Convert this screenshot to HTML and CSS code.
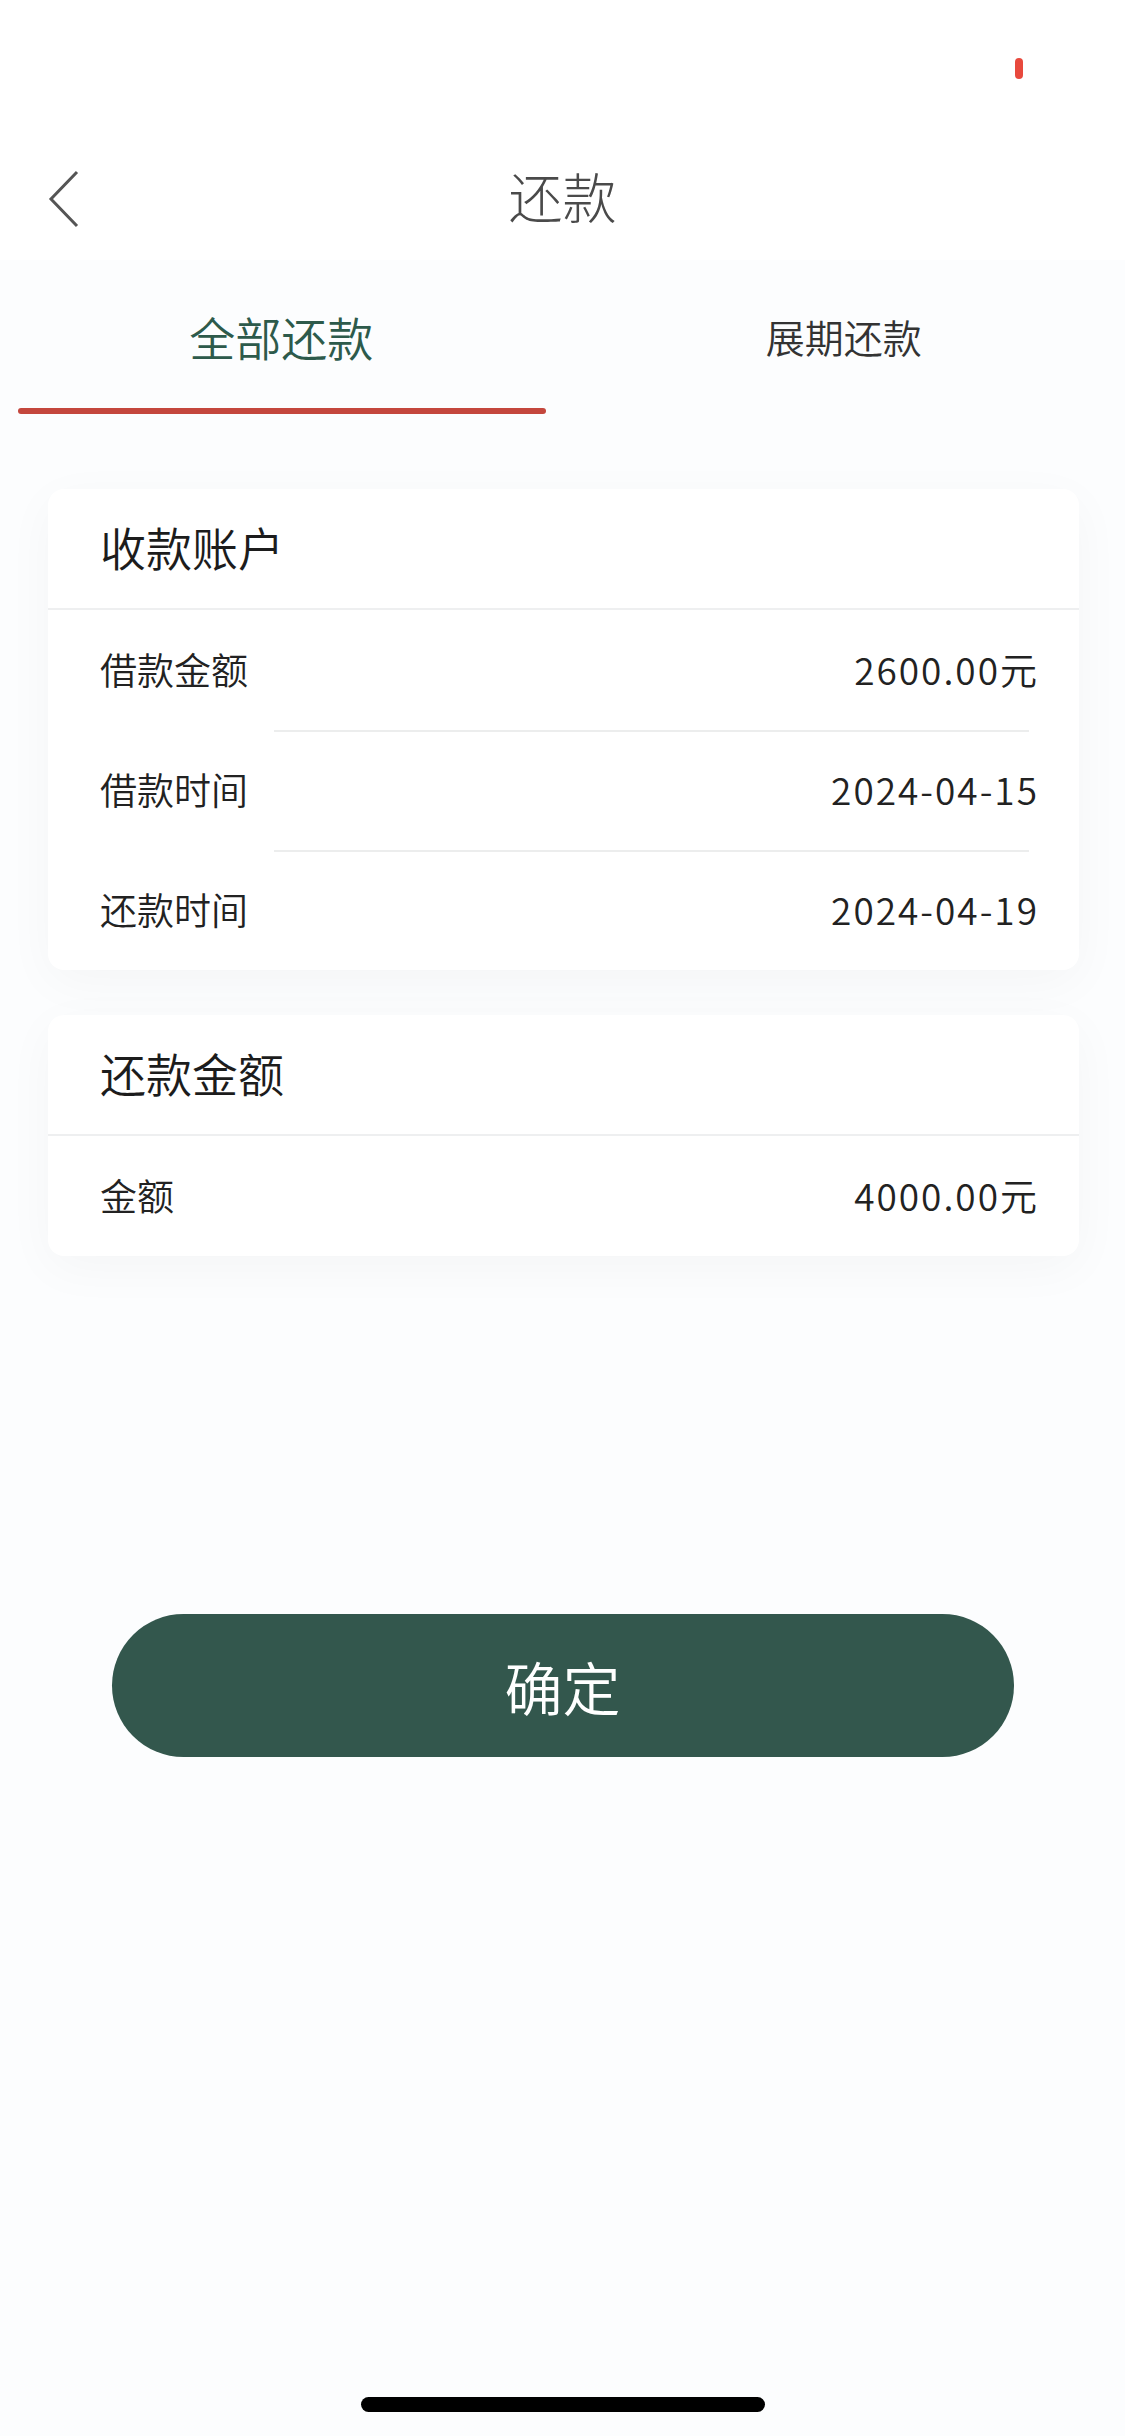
FILE: index.html
```html
<!DOCTYPE html>
<html lang="zh-CN">
<head>
    <meta charset="UTF-8">
    <meta name="viewport" content="width=device-width, initial-scale=1.0">
    <title>还款</title>
    <link rel="stylesheet" href="styles.css">
</head>
<body>
    <div class="page">
        <!-- Header: status bar + nav -->
        <div class="top">
            <div class="status-bar">
                <span class="rec-dot"></span>
            </div>
            <div class="nav-bar">
                <a class="back" href="#">
                    <svg width="32" height="58" viewBox="0 0 32 58">
                        <polyline points="29,2 3,29 29,56" fill="none" stroke="#555" stroke-width="3"/>
                    </svg>
                </a>
                <div class="nav-title">还款</div>
                <div></div>
            </div>
        </div>

        <!-- Tabs -->
        <div class="tabs">
            <div class="tab active"><span class="tab-label">全部还款</span></div>
            <div class="tab"><span class="tab-label">展期还款</span></div>
        </div>

        <!-- Account card -->
        <div class="card">
            <div class="card-header">收款账户</div>
            <div class="row">
                <span class="row-label">借款金额</span>
                <span class="row-value">2600.00元</span>
            </div>
            <div class="row">
                <span class="row-label">借款时间</span>
                <span class="row-value">2024-04-15</span>
            </div>
            <div class="row">
                <span class="row-label">还款时间</span>
                <span class="row-value">2024-04-19</span>
            </div>
        </div>

        <!-- Amount card -->
        <div class="card">
            <div class="card-header">还款金额</div>
            <div class="row">
                <span class="row-label">金额</span>
                <span class="row-value">4000.00元</span>
            </div>
        </div>

        <button class="confirm">确定</button>

        <div class="home-indicator"></div>
    </div>
</body>
</html>
```

FILE: styles.css
```css
body {
    margin: 0;
    background-color: #fcfdfe;
    font-family: "Noto Sans CJK SC", "Noto Sans", sans-serif;
    font-weight: 350;
    color: #222;
}
.page {
    width: 1125px;
    min-height: 2436px;
    display: flex;
    flex-direction: column;
}
/* Header */
.top {
    background-color: #fff;
}
.status-bar {
    height: 131px;
    display: flex;
    justify-content: flex-end;
    padding: 58px 102px 0 0;
    box-sizing: border-box;
}
.rec-dot {
    width: 8px;
    height: 21px;
    border-radius: 4px;
    background-color: #e8493d;
}
.nav-bar {
    height: 129px;
    display: grid;
    grid-template-columns: 1fr auto 1fr;
    align-items: center;
    padding: 0 48px;
}
.back {
    display: flex;
    align-items: center;
    margin-top: 6px;
}
.nav-title {
    font-size: 54px;
    font-weight: 300;
    color: #4a4a4a;
    line-height: 1;
}
/* Tabs */
.tabs {
    display: flex;
}
.tab {
    flex: 1;
    display: flex;
    flex-direction: column;
    align-items: center;
}
.tab-label {
    height: 148px;
    padding-top: 4px;
    box-sizing: border-box;
    display: flex;
    align-items: center;
    font-size: 39px;
    color: #333;
}
.tab::after {
    content: "";
    align-self: stretch;
    height: 6px;
    margin: 0 17px 0 18px;
    border-radius: 3px;
}
.tab.active .tab-label {
    font-size: 46px;
    color: #2d5a4b;
}
.tab.active::after {
    background-color: #c4473d;
}
/* Cards */
.card {
    margin: 75px 46px 0 48px;
    background-color: #fff;
    border-radius: 16px;
    box-shadow: 0 12px 50px rgba(0, 0, 0, 0.035);
}
.card + .card {
    margin-top: 45px;
}
.card-header {
    height: 121px;
    box-sizing: border-box;
    display: flex;
    align-items: center;
    padding: 0 0 6px 52px;
    font-size: 46px;
    color: #1c1c1c;
    border-bottom: 2px solid #eeeff0;
}
.row {
    height: 120px;
    box-sizing: border-box;
    display: flex;
    align-items: center;
    justify-content: space-between;
    padding: 0 40px 3px 52px;
    font-size: 37px;
    color: #222;
}
.row + .row {
    background: linear-gradient(#eceded, #eceded) no-repeat 226px 0 / calc(100% - 276px) 2px;
}
.row-value {
    letter-spacing: 2px;
}
/* Confirm button */
.confirm {
    display: block;
    width: 902px;
    height: 143px;
    margin: 358px auto 0;
    border: none;
    border-radius: 72px;
    background-color: #33574d;
    color: #fff;
    font-family: inherit;
    font-weight: 350;
    font-size: 58px;
    cursor: pointer;
}
.home-indicator {
    width: 404px;
    height: 15px;
    margin: auto auto 24px;
    border-radius: 8px;
    background-color: #000;
}
```
